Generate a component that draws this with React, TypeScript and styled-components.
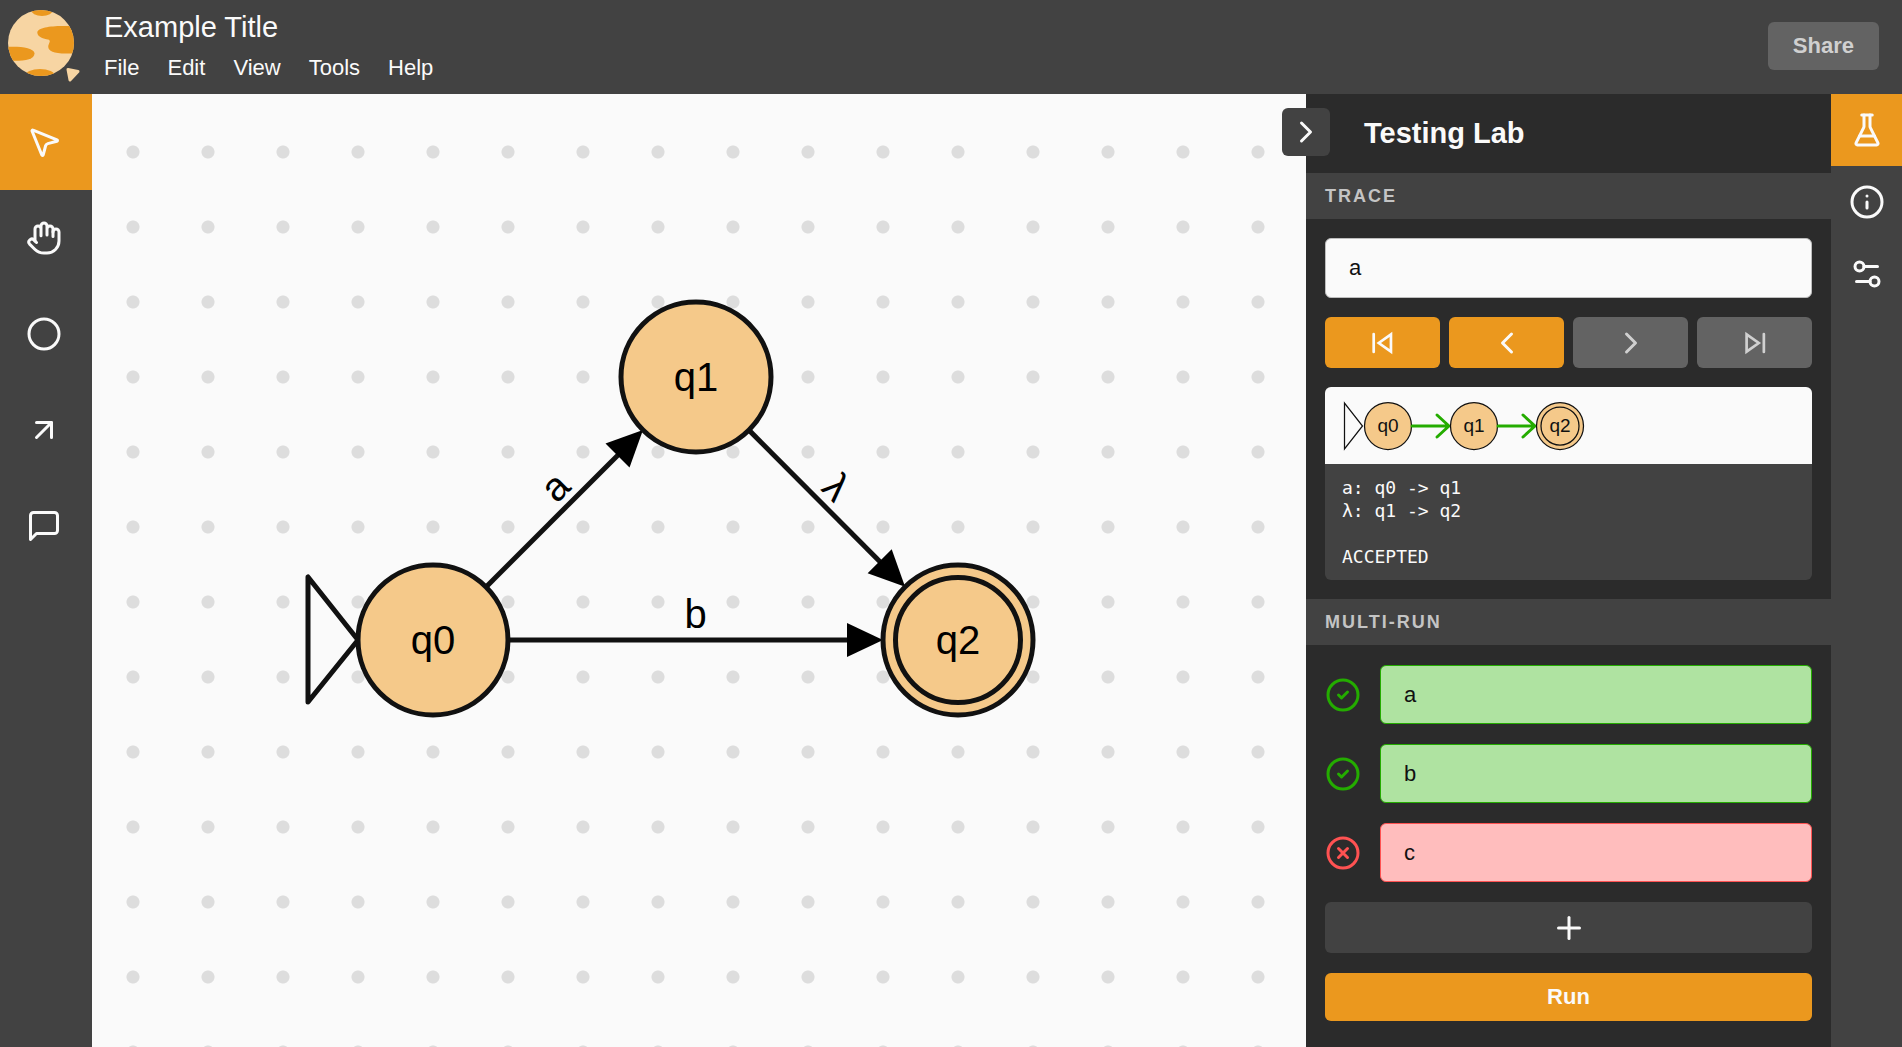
import React from 'react'
import styled, { createGlobalStyle, css } from 'styled-components'
import {
  ArrowUpRight,
  ChevronLeft,
  ChevronRight,
  Circle,
  Info,
  MousePointer2,
  Plus,
  Settings2,
} from 'lucide-react'

const color = {
  bar: '#424242',
  panel: '#2b2b2b',
  canvas: '#fafafa',
  dot: '#dddddd',
  primary: '#eb981e',
  disabled: '#636363',
  disabledText: '#d0d0d0',
  heading: '#c4c4c4',
  state: '#f5c98a',
  ink: '#111111',
  success: '#24ac00',
  successFill: '#afe3a1',
  error: '#ff5252',
  errorFill: '#ffbdbd',
  white: '#fafafa',
}

const GlobalStyle = createGlobalStyle`
  *, *::before, *::after { box-sizing: border-box; }
  body {
    margin: 0;
    background: ${color.panel};
    color: ${color.white};
    font-family: "Liberation Sans", Arial, sans-serif;
    font-size: 22px;
    line-height: 26px;
  }
  button, input { font: inherit; margin: 0; }
  button { border: 0; padding: 0; color: inherit; background: none; cursor: pointer; }
  svg { display: block; flex: none; }
`

/* ---------- layout ---------- */

const Page = styled.div`
  min-height: 100vh;
  display: flex;
  flex-direction: column;
`

const Header = styled.header`
  display: flex;
  align-items: center;
  height: 94px;
  padding: 0 23px 2px 6px;
  background: ${color.bar};
`

const HeaderText = styled.div`
  display: flex;
  flex-direction: column;
  gap: 12px;
  flex: 1;
  margin-left: 22px;
`

const Title = styled.h1`
  margin: 0;
  font-size: 29px;
  line-height: 32px;
  font-weight: 400;
`

const Menu = styled.nav`
  display: flex;
  gap: 28px;
`

const MenuButton = styled.button``

const Main = styled.main`
  flex: 1;
  display: flex;
`

const Toolbar = styled.div`
  width: 92px;
  background: ${color.bar};
`

const ToolButton = styled.button<{ $active?: boolean }>`
  display: flex;
  align-items: center;
  justify-content: center;
  width: 100%;
  height: 96px;
  padding-right: 4px;
  background: ${p => (p.$active ? color.primary : 'transparent')};
`

const Canvas = styled.div`
  flex: 1;
  min-width: 0;
  display: flex;
  overflow: hidden;
  background: ${color.canvas} radial-gradient(circle at 41px 58px, ${color.dot} 6px, transparent 7px) 0 0 / 75px 75px;
`

const Drawing = styled.svg`
  flex: 1;
  height: 100%;
  min-width: 0;
`

const Panel = styled.aside`
  position: relative;
  width: 525px;
  background: ${color.panel};
`

const CollapseButton = styled.button`
  position: absolute;
  top: 14px;
  left: -24px;
  display: flex;
  align-items: center;
  justify-content: center;
  width: 48px;
  height: 48px;
  border-radius: 6px;
  background: ${color.bar};
`

const PanelTitle = styled.h2`
  margin: 0;
  padding: 23px 58px 24px;
  font-size: 29px;
  line-height: 32px;
`

const SectionTitle = styled.h3`
  margin: 0;
  padding: 12px 19px;
  background: ${color.bar};
  color: ${color.heading};
  font-size: 18px;
  line-height: 22px;
  letter-spacing: 2px;
  text-transform: uppercase;
`

const Section = styled.div<{ $gap: number }>`
  display: flex;
  flex-direction: column;
  gap: ${p => p.$gap}px;
  padding: ${p => p.$gap}px 19px;
`

const Tabs = styled.div`
  width: 71px;
  background: ${color.bar};
`

const TabButton = styled.button<{ $active?: boolean }>`
  display: flex;
  align-items: center;
  justify-content: center;
  width: 100%;
  height: 72px;
  background: ${p => (p.$active ? color.primary : 'transparent')};
`

/* ---------- controls ---------- */

const variants = {
  primary: css`
    background: ${color.primary};
  `,
  plain: css`
    background: ${color.bar};
  `,
  disabled: css`
    background: ${color.disabled};
    color: ${color.disabledText};
    cursor: default;
  `,
}

const Button = styled.button<{ $variant: keyof typeof variants; $height?: number }>`
  display: flex;
  align-items: center;
  justify-content: center;
  height: ${p => p.$height ?? 48}px;
  padding: 0 25px;
  border-radius: 6px;
  font-weight: 700;
  ${p => variants[p.$variant]}
`

type Result = 'accepted' | 'rejected'

const resultStyle = {
  accepted: css`
    border-color: ${color.success};
    background: ${color.successFill};
  `,
  rejected: css`
    border-color: ${color.error};
    background: ${color.errorFill};
  `,
}

const TextInput = styled.input<{ $result?: Result }>`
  flex: 1;
  min-width: 0;
  padding: 16px 23px;
  border: 1px solid #bdbdbd;
  border-radius: 6px;
  outline: 0;
  background: ${color.white};
  color: ${color.ink};
  ${p => p.$result && resultStyle[p.$result]}
`

const TraceInput = styled.div`
  display: flex;
  height: 60px;
`

const StepButtons = styled.div`
  display: grid;
  grid-template-columns: repeat(4, 1fr);
  gap: 9px;
`

const TraceCard = styled.div`
  overflow: hidden;
  border-radius: 6px;
  background: ${color.bar};
`

const TracePreview = styled.div`
  padding: 14px 17px 13px;
  background: ${color.canvas};
`

const TraceLog = styled.pre`
  margin: 0;
  padding: 12px 17px;
  font-family: "DejaVu Sans Mono", monospace;
  font-size: 18px;
  line-height: 23px;
`

const RunRow = styled.div<{ $result: Result }>`
  display: flex;
  align-items: center;
  gap: 19px;
  height: 59px;
  color: ${p => (p.$result === 'accepted' ? color.success : color.error)};

  ${TextInput} {
    align-self: stretch;
  }
`

/* ---------- icons ---------- */

const iconProps = { size: 36, strokeWidth: 2, 'aria-hidden': true } as const

const Icon = ({ children }: { children: React.ReactNode }) => (
  <svg
    width="36"
    height="36"
    viewBox="0 0 24 24"
    fill="none"
    stroke="currentColor"
    strokeWidth="2"
    strokeLinecap="round"
    strokeLinejoin="round"
    aria-hidden="true"
  >
    {children}
  </svg>
)

const HandIcon = () => (
  <Icon>
    <path d="M18 11V6a2 2 0 0 0-4 0M14 10V4a2 2 0 0 0-4 0v2M10 10.5V6a2 2 0 0 0-4 0v8" />
    <path d="M18 8a2 2 0 1 1 4 0v6a8 8 0 0 1-8 8h-2c-2.8 0-4.5-.86-5.99-2.34l-3.6-3.6a2 2 0 0 1 2.83-2.82L7 15" />
  </Icon>
)

const FlaskIcon = () => (
  <Icon>
    <path d="M10 2v7.527a2 2 0 0 1-.211.896L4.72 20.55a1 1 0 0 0 .9 1.45h12.76a1 1 0 0 0 .9-1.45l-5.069-10.127A2 2 0 0 1 14 9.527V2" />
    <path d="M8.5 2h7M7 16h10" />
  </Icon>
)

const SkipBackIcon = () => (
  <Icon>
    <path d="M17.3 6.300v11.400L9.200 12z" strokeLinejoin="miter" strokeWidth="1.8" />
    <path d="M5.8 6v12" strokeWidth="1.8" />
  </Icon>
)

const SkipForwardIcon = () => (
  <Icon>
    <path d="M6.4 6.300v11.400l8.100-5.700z" strokeLinejoin="miter" strokeWidth="1.8" />
    <path d="M17.9 6v12" strokeWidth="1.8" />
  </Icon>
)

const ResultIcon = ({ result }: { result: Result }) => (
  <Icon>
    <circle cx="12" cy="12" r="10" />
    <path d={result === 'accepted' ? 'm9 12 2 2 4-4' : 'm15 9-6 6M9 9l6 6'} />
  </Icon>
)

const Logo = () => (
  <svg width="76" height="76" viewBox="6 8 76 76" role="img" aria-label="Logo">
    <defs>
      <clipPath id="planet">
        <circle cx="41" cy="43" r="33" />
      </clipPath>
    </defs>
    <circle cx="41" cy="43" r="33" fill="#f7d5a3" />
    <g clipPath="url(#planet)" fill={color.primary}>
      <ellipse cx="42" cy="10" rx="11" ry="6" />
      <path d="M76 26H62C50 26 37.300 28 37.300 32.500C37.300 37 44 39 48 39.500C51 40.500 49.500 42 48.500 45C47 50 52 53.500 66 53.500H76Z" />
      <path d="M6 47C18 46 34.500 47.500 34.500 53.500C34.500 60 22 61.500 6 60.500Z" />
      <ellipse cx="40" cy="76" rx="15" ry="7" />
    </g>
    <path d="M68 69.500L78 71.500L70 80Z" fill="#f7d5a3" stroke="#f7d5a3" strokeWidth="3" strokeLinejoin="round" />
  </svg>
)

/* ---------- automaton ---------- */

interface StateNode {
  id: string
  x: number
  y: number
  final?: boolean
}

const states: StateNode[] = [
  { id: 'q0', x: 341, y: 546 },
  { id: 'q1', x: 604, y: 283 },
  { id: 'q2', x: 866, y: 546, final: true },
]

const transitions = [
  { from: 0, to: 1, label: 'a' },
  { from: 1, to: 2, label: 'λ' },
  { from: 0, to: 2, label: 'b' },
]

const RADIUS = 75

const Transition = ({ from, to, label }: { from: StateNode; to: StateNode; label: string }) => {
  const dx = to.x - from.x
  const dy = to.y - from.y
  const length = Math.hypot(dx, dy)
  const angle = (Math.atan2(dy, dx) * 180) / Math.PI
  const end = length - RADIUS
  return (
    <>
      <g transform={`translate(${from.x} ${from.y}) rotate(${angle})`}>
        <line x1={RADIUS} x2={end - 20} y1="0" y2="0" stroke={color.ink} strokeWidth="5" />
        <path d={`M${end} 0l-36-17v34z`} fill="#000" />
      </g>
      <text
        transform={`translate(${from.x + dx / 2} ${from.y + dy / 2 - 12}) rotate(${angle})`}
        fontSize="40"
        textAnchor="middle"
        fill="#000"
      >
        {label}
      </text>
    </>
  )
}

const Automaton = () => (
  <Drawing role="img" aria-label="State diagram">
    {transitions.map(t => (
      <Transition key={t.label} from={states[t.from]} to={states[t.to]} label={t.label} />
    ))}
    <path d="M216 483v125l50-62z" fill={color.canvas} stroke={color.ink} strokeWidth="5" strokeLinejoin="round" />
    {states.map(s => (
      <g key={s.id} stroke={color.ink} strokeWidth="5" fill={color.state}>
        <circle cx={s.x} cy={s.y} r={RADIUS} />
        {s.final && <circle cx={s.x} cy={s.y} r="62.5" />}
        <text x={s.x} y={s.y + 14} fontSize="40" textAnchor="middle" fill="#000" stroke="none">
          {s.id}
        </text>
      </g>
    ))}
  </Drawing>
)

const TraceDiagram = () => (
  <svg width="244" height="50" role="img" aria-label="Trace of states">
    <path d="M2.500 2v46l18-23z" fill="none" stroke={color.ink} strokeWidth="1.25" />
    {states.map((s, i) => {
      const x = 46 + i * 86
      return (
        <g key={s.id}>
          {i > 0 && (
            <path
              d={`M${x - 62} 25h37m-12-11l12 11l-12 11`}
              fill="none"
              stroke={color.success}
              strokeWidth="3"
              strokeLinecap="round"
              strokeLinejoin="round"
            />
          )}
          <circle cx={x} cy="25" r="23.500" fill={color.state} stroke={color.ink} strokeWidth="1.25" />
          {s.final && <circle cx={x} cy="25" r="19" fill="none" stroke={color.ink} strokeWidth="1.25" />}
          <text x={x} y="31" fontSize="19" textAnchor="middle" fill={color.ink}>
            {s.id}
          </text>
        </g>
      )
    })}
  </svg>
)

/* ---------- app ---------- */

const runs: { value: string; result: Result }[] = [
  { value: 'a', result: 'accepted' },
  { value: 'b', result: 'accepted' },
  { value: 'c', result: 'rejected' },
]

export default function App() {
  return (
    <Page>
      <GlobalStyle />
      <Header>
        <Logo />
        <HeaderText>
          <Title>Example Title</Title>
          <Menu>
            {['File', 'Edit', 'View', 'Tools', 'Help'].map(name => (
              <MenuButton key={name} type="button">{name}</MenuButton>
            ))}
          </Menu>
        </HeaderText>
        <Button type="button" $variant="disabled">Share</Button>
      </Header>
      <Main>
        <Toolbar>
          <ToolButton type="button" aria-label="Select" $active><MousePointer2 {...iconProps} /></ToolButton>
          <ToolButton type="button" aria-label="Pan"><HandIcon /></ToolButton>
          <ToolButton type="button" aria-label="Add state"><Circle {...iconProps} /></ToolButton>
          <ToolButton type="button" aria-label="Add transition"><ArrowUpRight {...iconProps} /></ToolButton>
          <ToolButton type="button" aria-label="Add comment">
            <Icon><path d="M21 15a2 2 0 0 1-2 2H7l-4 4V5a2 2 0 0 1 2-2h14a2 2 0 0 1 2 2z" /></Icon>
          </ToolButton>
        </Toolbar>
        <Canvas>
          <Automaton />
        </Canvas>
        <Panel>
          <CollapseButton type="button" aria-label="Collapse panel"><ChevronRight {...iconProps} /></CollapseButton>
          <PanelTitle>Testing Lab</PanelTitle>
          <SectionTitle>Trace</SectionTitle>
          <Section $gap={19}>
            <TraceInput>
              <TextInput type="text" aria-label="Trace input" defaultValue="a" />
            </TraceInput>
            <StepButtons>
              <Button type="button" aria-label="To start" $variant="primary" $height={51}><SkipBackIcon /></Button>
              <Button type="button" aria-label="Step back" $variant="primary" $height={51}><ChevronLeft {...iconProps} /></Button>
              <Button type="button" aria-label="Step forward" $variant="disabled" $height={51}><ChevronRight {...iconProps} /></Button>
              <Button type="button" aria-label="To end" $variant="disabled" $height={51}><SkipForwardIcon /></Button>
            </StepButtons>
            <TraceCard>
              <TracePreview><TraceDiagram /></TracePreview>
              <TraceLog>{'a: q0 -> q1\nλ: q1 -> q2\n\nACCEPTED'}</TraceLog>
            </TraceCard>
          </Section>
          <SectionTitle>Multi-run</SectionTitle>
          <Section $gap={20}>
            {runs.map(run => (
              <RunRow key={run.value} $result={run.result}>
                <ResultIcon result={run.result} />
                <TextInput
                  type="text"
                  aria-label={`Run input ${run.value}`}
                  defaultValue={run.value}
                  $result={run.result}
                />
              </RunRow>
            ))}
            <Button type="button" aria-label="Add input" $variant="plain" $height={51}><Plus {...iconProps} /></Button>
            <Button type="button" $variant="primary">Run</Button>
          </Section>
        </Panel>
        <Tabs>
          <TabButton type="button" aria-label="Testing lab" $active><FlaskIcon /></TabButton>
          <TabButton type="button" aria-label="Info"><Info {...iconProps} /></TabButton>
          <TabButton type="button" aria-label="Options"><Settings2 {...iconProps} /></TabButton>
        </Tabs>
      </Main>
    </Page>
  )
}
